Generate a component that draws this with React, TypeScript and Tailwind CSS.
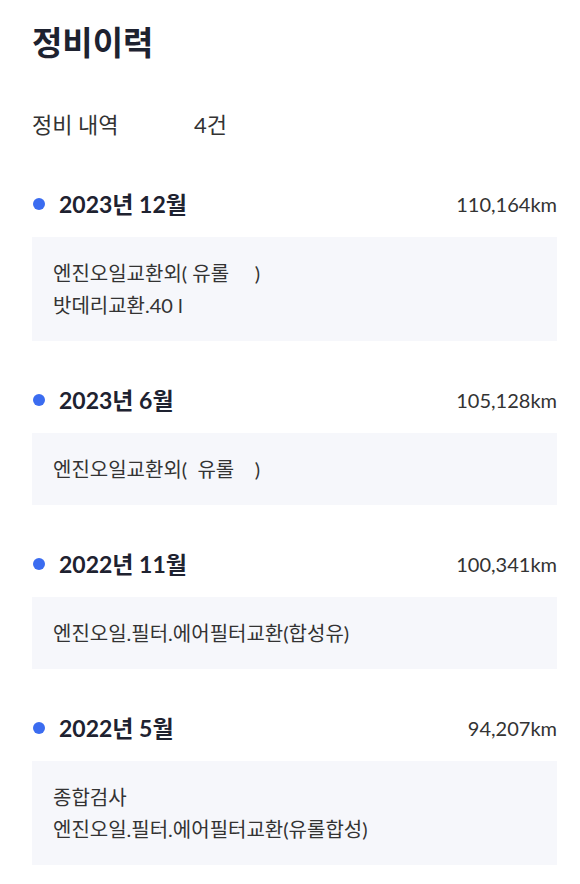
const items = [
  { date: "2023년 12월", km: "110,164km", lines: ["엔진오일교환외( 유롤\u00a0\u00a0\u00a0\u00a0\u00a0)", "밧데리교환.40 l"] },
  { date: "2023년 6월", km: "105,128km", lines: ["엔진오일교환외(\u00a0 유롤\u00a0\u00a0\u00a0 )"] },
  { date: "2022년 11월", km: "100,341km", lines: ["엔진오일.필터.에어필터교환(합성유)"] },
  { date: "2022년 5월", km: "94,207km", lines: ["종합검사", "엔진오일.필터.에어필터교환(유롤합성)"] },
];

export default function App() {
  return (
    <div
      className="w-[580px] min-h-[884px] bg-white pl-[32px] pr-[23px] pt-[21px] text-[#222]"
      style={{ fontFamily: "Lato, 'Noto Sans CJK KR', sans-serif" }}
    >
      <h1 className="text-[33px] font-bold leading-[42px] text-[#1e2230]">정비이력</h1>
      <div className="mt-[48px] flex items-center text-[22px] leading-[28px] text-[#333]">
        <span className="w-[162px]">정비 내역</span>
        <span>4건</span>
      </div>
      <div className="mt-[51px] flex flex-col gap-[45px]">
        {items.map((it) => (
          <div key={it.date}>
            <div className="flex items-center justify-between h-[28px]">
              <div className="flex items-center">
                <span className="ml-[1px] h-[12px] w-[12px] rounded-full bg-[#3b6cf0]" />
                <span className="ml-[14px] text-[23px] font-bold text-[#1e2230]">{it.date}</span>
              </div>
              <span className="text-[20px] text-[#333]">{it.km}</span>
            </div>
            <div className="mt-[19px] bg-[#f6f7fb] px-[21px] py-[20px] text-[20px] leading-[32px] text-[#333]">
              {it.lines.map((l) => (
                <div key={l}>{l}</div>
              ))}
            </div>
          </div>
        ))}
      </div>
    </div>
  );
}
